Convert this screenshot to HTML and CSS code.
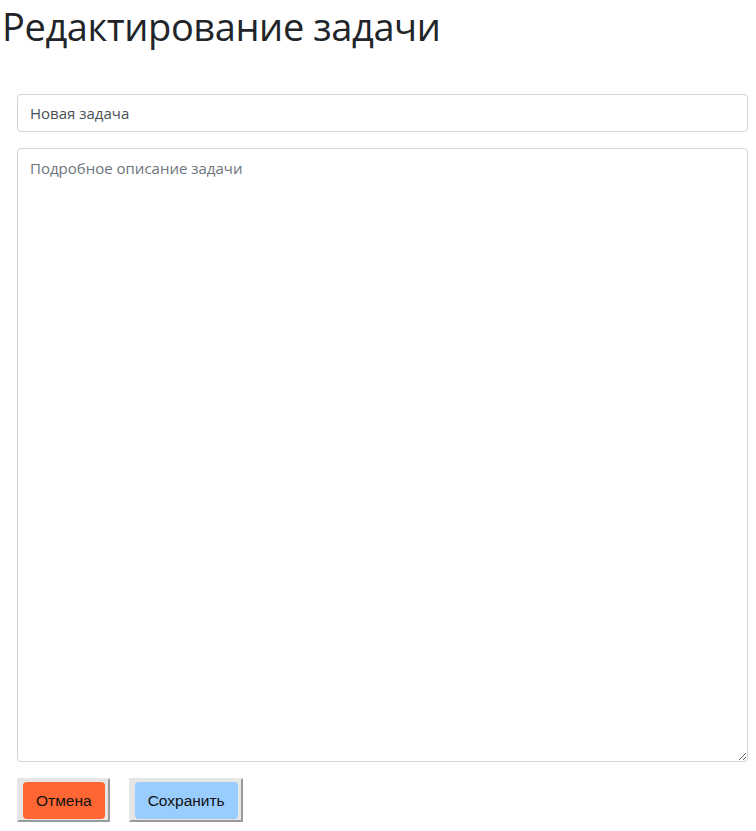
FILE: index.html
```html
<!DOCTYPE html>
<html lang="ru">
<head>
<meta charset="utf-8">
<title>Редактирование задачи</title>
<link rel="stylesheet" href="styles.css">
</head>
<body>
<h1 class="title">Редактирование задачи</h1>
<form class="task-form">
  <input class="field field-title" type="text" value="Новая задача">
  <textarea class="field field-body" placeholder="Подробное описание задачи"></textarea>
  <div class="actions">
    <button type="button" class="btn"><span class="btn-face btn-cancel">Отмена</span></button>
    <button type="button" class="btn"><span class="btn-face btn-save">Сохранить</span></button>
  </div>
</form>
</body>
</html>
```
FILE: styles.css
```css
* { box-sizing: border-box; }
html, body {
  margin: 0;
  background: #fff;
  font-family: "Open Sans", "Noto Sans", sans-serif;
  color: #212529;
}
.title {
  margin: 0;
  padding: 3px 0 0 2px;
  font-size: 38px;
  font-weight: 400;
  line-height: 47px;
  letter-spacing: -0.4px;
}
.task-form {
  display: flex;
  flex-direction: column;
  padding: 44px 8px 0 17px;
}
.field {
  display: block;
  width: 100%;
  border: 1px solid #ced4da;
  border-radius: 4px;
  font-family: inherit;
  font-size: 15px;
  color: #495057;
  background: #fff;
  padding: 6px 12px;
}
.field-title {
  height: 38px;
}
.field-body {
  margin-top: 16px;
  height: 614px;
  resize: vertical;
  padding: 8px 12px;
  line-height: 22px;
}
.field-body::placeholder {
  color: #6c757d;
  opacity: 1;
}
.actions {
  display: flex;
  gap: 19px;
  margin-top: 16px;
}
.btn {
  display: flex;
  padding: 2px 3px 1px 4px;
  border: 2px solid;
  border-color: #e6e6e6 #9a9a9a #9a9a9a #e6e6e6;
  background: #e6e6e6;
  cursor: pointer;
}
.btn-face {
  display: block;
  border-radius: 4px;
  font-family: inherit;
  font-size: 15.5px;
  line-height: 37px;
  color: #111;
  padding: 0 13px;
}
.btn-cancel { background: #ff6633; }
.btn-save { background: #99ccff; }
```
